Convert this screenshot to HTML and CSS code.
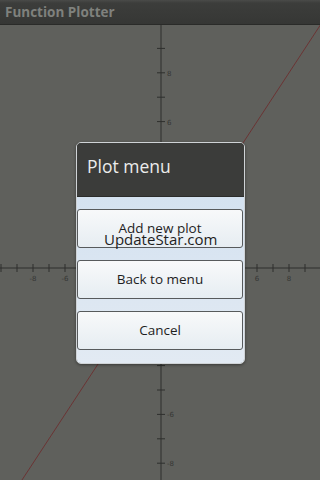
FILE: index.html
```html
<!DOCTYPE html>
<html>
<head>
<meta charset="utf-8">
<link rel="stylesheet" href="styles.css">
</head>
<body>
<div class="screen">
  <div class="titlebar">Function Plotter</div>
  <div class="plot">
    <svg class="graph" viewBox="0 25 320 455" width="320" height="455">
      <g id="axes"></g>
    </svg>
  </div>
  <div class="dialog">
    <div class="dlg-title">Plot menu</div>
    <div class="dlg-body">
      <div class="btn">Add new plot</div>
      <div class="btn">Back to menu</div>
      <div class="btn">Cancel</div>
    </div>
  </div>
  <div class="watermark">UpdateStar.com</div>
</div>
<script src="plot.js"></script>
</body>
</html>
```
FILE: plot.js
```js
(function(){
  var ns = "http://www.w3.org/2000/svg";
  var g = document.getElementById("axes");
  var ox = 161, oy = 268, sx = 16, sy = 24.4;
  /* labels hidden under the dialog are not drawn */
  var dlg = {l: 70, r: 252, t: 136, b: 370};
  function hidden(x, y){ return x > dlg.l && x < dlg.r && y > dlg.t && y < dlg.b; }
  function el(name, attrs, text){
    var e = document.createElementNS(ns, name);
    for (var k in attrs) e.setAttribute(k, attrs[k]);
    if (text !== undefined) e.textContent = text;
    g.appendChild(e);
    return e;
  }
  el("line", {x1:0, y1:oy, x2:320, y2:oy, "class":"axis"});
  el("line", {x1:ox, y1:25, x2:ox, y2:480, "class":"axis"});
  for (var k = -10; k <= 10; k++) {
    if (k === 0) continue;
    var x = ox + k * sx;
    if (x >= 0 && x <= 320) {
      el("line", {x1:x, y1:oy-4, x2:x, y2:oy+4, "class":"tick"});
      if (k % 2 === 0 && Math.abs(k) < 10 && !hidden(x, oy + 10))
        el("text", {x:x, y:oy+13, "class":"lbl", "text-anchor":"middle"}, String(k));
    }
    var y = oy - k * sy;
    if (y >= 25 && y <= 480) {
      el("line", {x1:ox-4, y1:y, x2:ox+4, y2:y, "class":"tick"});
      if (k % 2 === 0 && !hidden(ox + 8, y))
        el("text", {x:ox+6, y:y+3, "class":"lbl"}, String(k));
    }
  }
  el("line", {x1:ox - 9*sx, y1:oy + 9*sy, x2:ox + 10*sx, y2:oy - 10*sy, "class":"fn"});
})();
```
FILE: styles.css
```css
html, body {
  margin: 0;
  padding: 0;
}
body {
  width: 320px;
  height: 480px;
  overflow: hidden;
  background: #5f605c;
  font-family: "Open Sans", "DejaVu Sans", sans-serif;
}
.screen {
  position: relative;
  width: 320px;
  height: 480px;
  display: flex;
  flex-direction: column;
}
.titlebar {
  height: 25px;
  box-sizing: border-box;
  padding-left: 5px;
  background: linear-gradient(#4a4b49 0, #3c3d3b 3px, #363735 100%);
  border-bottom: 1px solid #2a2b29;
  color: #7f817d;
  font-weight: bold;
  font-size: 13.5px;
  line-height: 24px;
}
.plot {
  flex: 1;
  background: #5f605c;
}
.graph {
  display: block;
}
.axis {
  stroke: #2e2f2d;
  stroke-width: 1;
}
.tick {
  stroke: #2e2f2d;
  stroke-width: 1;
}
.fn {
  stroke: #6b3434;
  stroke-width: 1;
}
.lbl {
  fill: #363735;
  font-size: 7px;
  font-family: "DejaVu Sans", sans-serif;
}
.dialog {
  position: absolute;
  left: 76px;
  top: 142px;
  width: 169px;
  border-radius: 5px;
  overflow: hidden;
  border: 1px solid #cfd3d6;
  box-sizing: border-box;
  box-shadow: 0 1px 3px rgba(0,0,0,0.4);
}
.dlg-title {
  height: 53px;
  background: #3b3c3a;
  color: #ececec;
  font-size: 17.5px;
  line-height: 46px;
  padding-left: 10px;
  border-bottom: 1px solid #2b2c2a;
}
.dlg-body {
  background: linear-gradient(#d4e2f0, #e2eaf3);
  padding: 12px 1px 13px 0;
  display: flex;
  flex-direction: column;
  gap: 12px;
}
.btn {
  height: 39px;
  box-sizing: border-box;
  border: 1.5px solid #575a5c;
  border-radius: 3px;
  background: linear-gradient(#f8f9fa, #e6edf2);
  color: #1e1e1e;
  font-size: 13.5px;
  text-align: center;
  line-height: 36px;
}
.watermark {
  position: absolute;
  left: 104px;
  top: 229px;
  color: #1e1e1e;
  font-size: 15px;
  line-height: 20px;
}
```
